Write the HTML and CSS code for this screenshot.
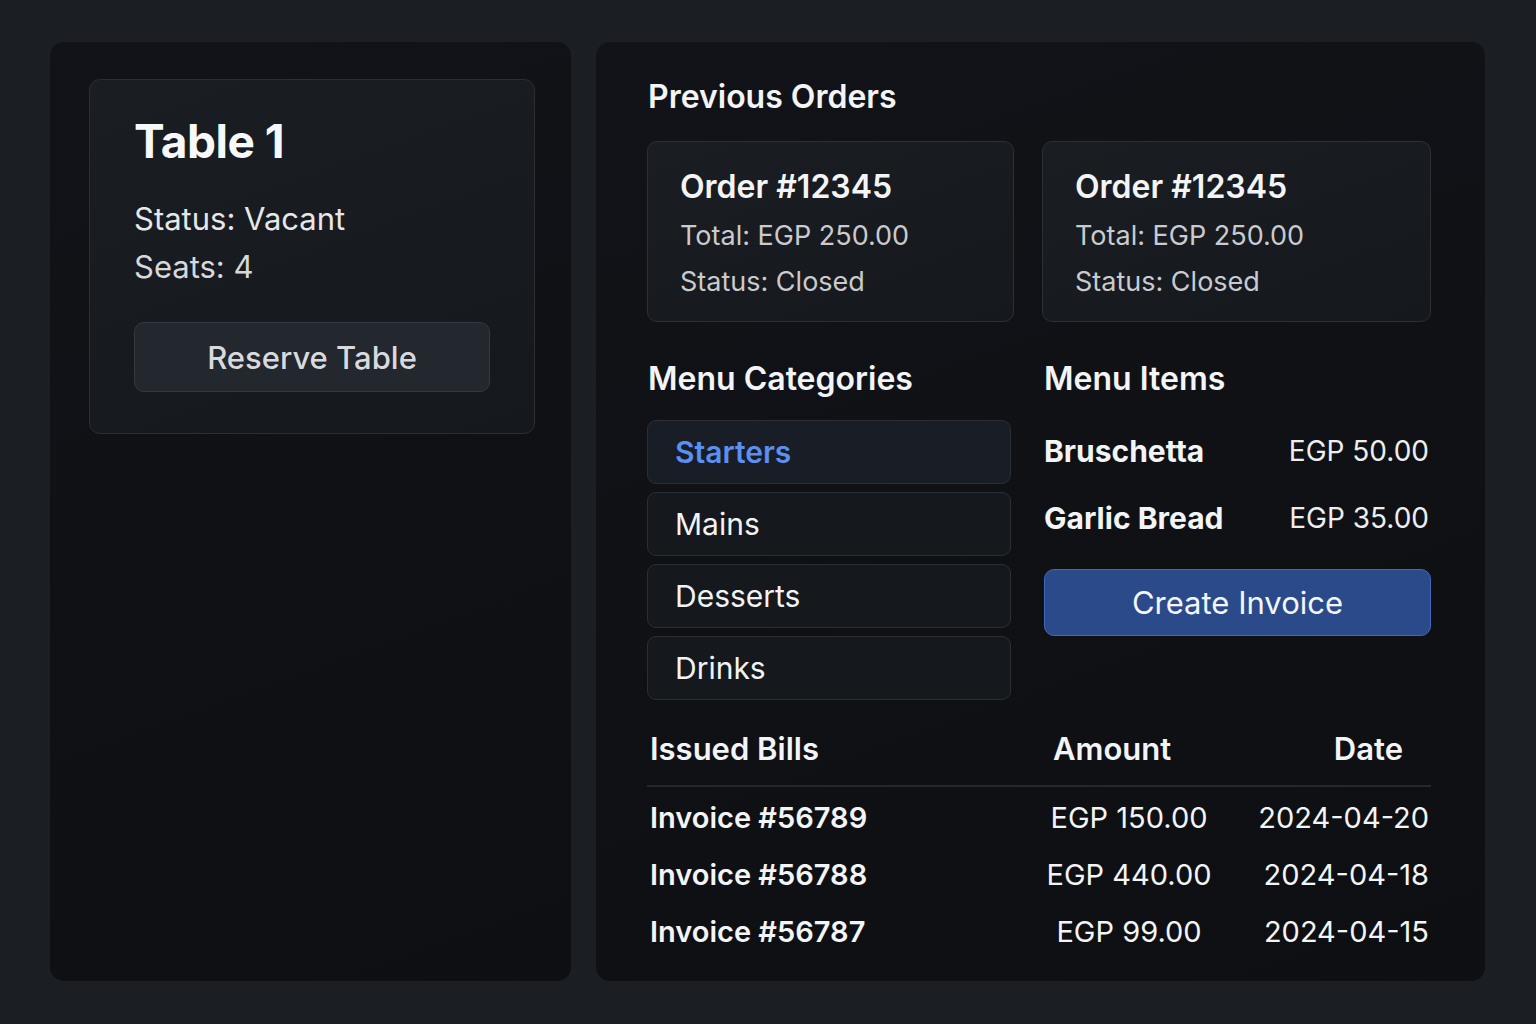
FILE: index.html
```html
<!DOCTYPE html>
<html lang="en">
<head>
<meta charset="utf-8">
<title>Table 1</title>
<link rel="stylesheet" href="styles.css">
</head>
<body>
<main class="layout">
  <aside class="panel panel-left">
    <section class="table-card">
      <h1 class="table-title">Table 1</h1>
      <p class="table-line status">Status: Vacant</p>
      <p class="table-line seats">Seats: 4</p>
      <button class="reserve-btn">Reserve Table</button>
    </section>
  </aside>

  <section class="panel panel-right">
    <h2 class="section-title">Previous Orders</h2>
    <div class="two-col">
      <article class="order-card">
        <h3 class="order-title">Order #12345</h3>
        <p class="order-line order-total">Total: EGP 250.00</p>
        <p class="order-line">Status: Closed</p>
      </article>
      <article class="order-card">
        <h3 class="order-title">Order #12345</h3>
        <p class="order-line order-total">Total: EGP 250.00</p>
        <p class="order-line">Status: Closed</p>
      </article>
    </div>

    <div class="two-col menu-row">
      <div class="categories">
        <h2 class="section-title">Menu Categories</h2>
        <ul class="cat-list">
          <li class="cat-item active">Starters</li>
          <li class="cat-item">Mains</li>
          <li class="cat-item">Desserts</li>
          <li class="cat-item">Drinks</li>
        </ul>
      </div>
      <div class="items">
        <h2 class="section-title">Menu Items</h2>
        <div class="item-row"><span class="item-name">Bruschetta</span><span class="item-price">EGP 50.00</span></div>
        <div class="item-row"><span class="item-name">Garlic Bread</span><span class="item-price">EGP 35.00</span></div>
        <button class="invoice-btn">Create Invoice</button>
      </div>
    </div>

    <div class="bills">
      <div class="bill-head">
        <span class="bh-name">Issued Bills</span>
        <span class="bh-amount">Amount</span>
        <span class="bh-date">Date</span>
      </div>
      <div class="bill-row"><span class="b-name">Invoice #56789</span><span class="b-amount">EGP 150.00</span><span class="b-date">2024-04-20</span></div>
      <div class="bill-row"><span class="b-name">Invoice #56788</span><span class="b-amount">EGP 440.00</span><span class="b-date">2024-04-18</span></div>
      <div class="bill-row"><span class="b-name">Invoice #56787</span><span class="b-amount">EGP 99.00</span><span class="b-date">2024-04-15</span></div>
    </div>
  </section>
</main>
</body>
</html>
```

FILE: styles.css
```css
* { box-sizing: border-box; }

html, body {
  margin: 0;
  padding: 0;
}

body {
  background: #1b1e23;
  font-family: "Inter", "Noto Sans", "Liberation Sans", sans-serif;
  color: #f2f3f5;
  width: 1536px;
  height: 1024px;
  overflow: hidden;
}

.layout {
  display: flex;
  gap: 25px;
  padding: 42px 51px 43px 50px;
  height: 1024px;
}

.panel {
  background: linear-gradient(160deg, #111318 0%, #0d0f12 100%);
  border-radius: 14px;
  height: 939px;
}

.panel-left {
  width: 521px;
  padding: 37px 36px 0 39px;
}

.panel-right {
  width: 889px;
  padding: 35px 54px 0 51px;
}

/* table card */
.table-card {
  background: linear-gradient(160deg, #1a1d22 0%, #15181c 100%);
  border: 1px solid #2a2e35;
  border-radius: 11px;
  padding: 33px 44px 41px 44px;
}

.table-title {
  margin: 0;
  font-size: 46px;
  line-height: 56px;
  font-weight: 700;
  color: #f7f8f9;
  letter-spacing: -0.5px;
}

.table-line {
  margin: 0;
  font-size: 31px;
  line-height: 48px;
  color: #e6e7e9;
}

.status { margin-top: 26px; }
.seats { color: #d6d8db; }

.reserve-btn {
  display: block;
  width: 100%;
  height: 70px;
  margin-top: 31px;
  background: #23272e;
  border: 1px solid #353a42;
  border-radius: 10px;
  font-family: inherit;
  font-size: 31px;
  color: #d8dadd;
  font-weight: 500;
}

/* right panel */
.section-title {
  margin: 0;
  font-size: 32px;
  line-height: 40px;
  font-weight: 600;
  color: #f3f4f6;
}

.panel-right > .section-title { padding-left: 1px; }

.two-col {
  display: grid;
  grid-template-columns: 367px 1fr;
  gap: 28px;
  margin-top: 24px;
}

.order-card {
  height: 181px;
  background: linear-gradient(160deg, #1a1d22 0%, #15181c 100%);
  border: 1px solid #2b2f36;
  border-radius: 10px;
  padding: 25px 30px 16px 32px;
}

.order-title {
  margin: 0 0 6px;
  font-size: 32px;
  line-height: 40px;
  font-weight: 600;
  color: #f3f4f6;
}

.order-line {
  margin: 0;
  font-size: 27px;
  line-height: 46px;
  color: #c9cbcf;
}

.menu-row {
  margin-top: 37px;
  grid-template-columns: 364px 1fr;
  gap: 33px;
}

.categories .section-title { padding-left: 1px; }

.cat-list {
  list-style: none;
  margin: 21px 0 0;
  padding: 0;
  display: flex;
  flex-direction: column;
  gap: 8px;
}

.cat-item {
  height: 64px;
  display: flex;
  align-items: center;
  padding-left: 27px;
  font-size: 30px;
  color: #f2f3f5;
  background: #15181d;
  border: 1px solid #2a2e35;
  border-radius: 9px;
}

.cat-item.active {
  color: #5b8ff0;
  font-weight: 600;
  background: #191d25;
}

.item-row {
  display: flex;
  justify-content: space-between;
  align-items: center;
  height: 67px;
  padding-right: 2px;
}

.items .section-title { margin-bottom: 18px; }

.item-name {
  font-size: 30px;
  font-weight: 700;
  color: #f3f4f6;
}

.item-price {
  font-size: 28px;
  color: #eceef0;
}

.invoice-btn {
  display: block;
  width: 100%;
  height: 67px;
  margin-top: 18px;
  background: #2b4a8a;
  border: 1px solid #4169c0;
  border-radius: 10px;
  font-family: inherit;
  font-size: 31px;
  color: #f4f6fb;
}

/* bills */
.bills {
  margin-top: 28px;
}

.bill-head, .bill-row {
  display: grid;
  grid-template-columns: 1fr 196px 200px;
  align-items: center;
}

.bill-head {
  height: 40px;
  margin-bottom: 21px;
  font-size: 31px;
  font-weight: 600;
  color: #f3f4f6;
  position: relative;
}

.bill-head::after {
  content: "";
  position: absolute;
  left: 0;
  right: 0;
  bottom: -19px;
  height: 2px;
  background: #23272e;
}

.bh-name { padding-left: 3px; }
.bh-amount { text-align: left; padding-left: 18px; }
.bh-date { text-align: right; padding-right: 28px; }

.bill-row {
  height: 57px;
  font-size: 29px;
  color: #f3f4f6;
}

.b-name { font-weight: 600; padding-left: 3px; }
.b-amount { text-align: center; padding-right: 8px; }
.b-date { text-align: right; padding-right: 2px; }
```
